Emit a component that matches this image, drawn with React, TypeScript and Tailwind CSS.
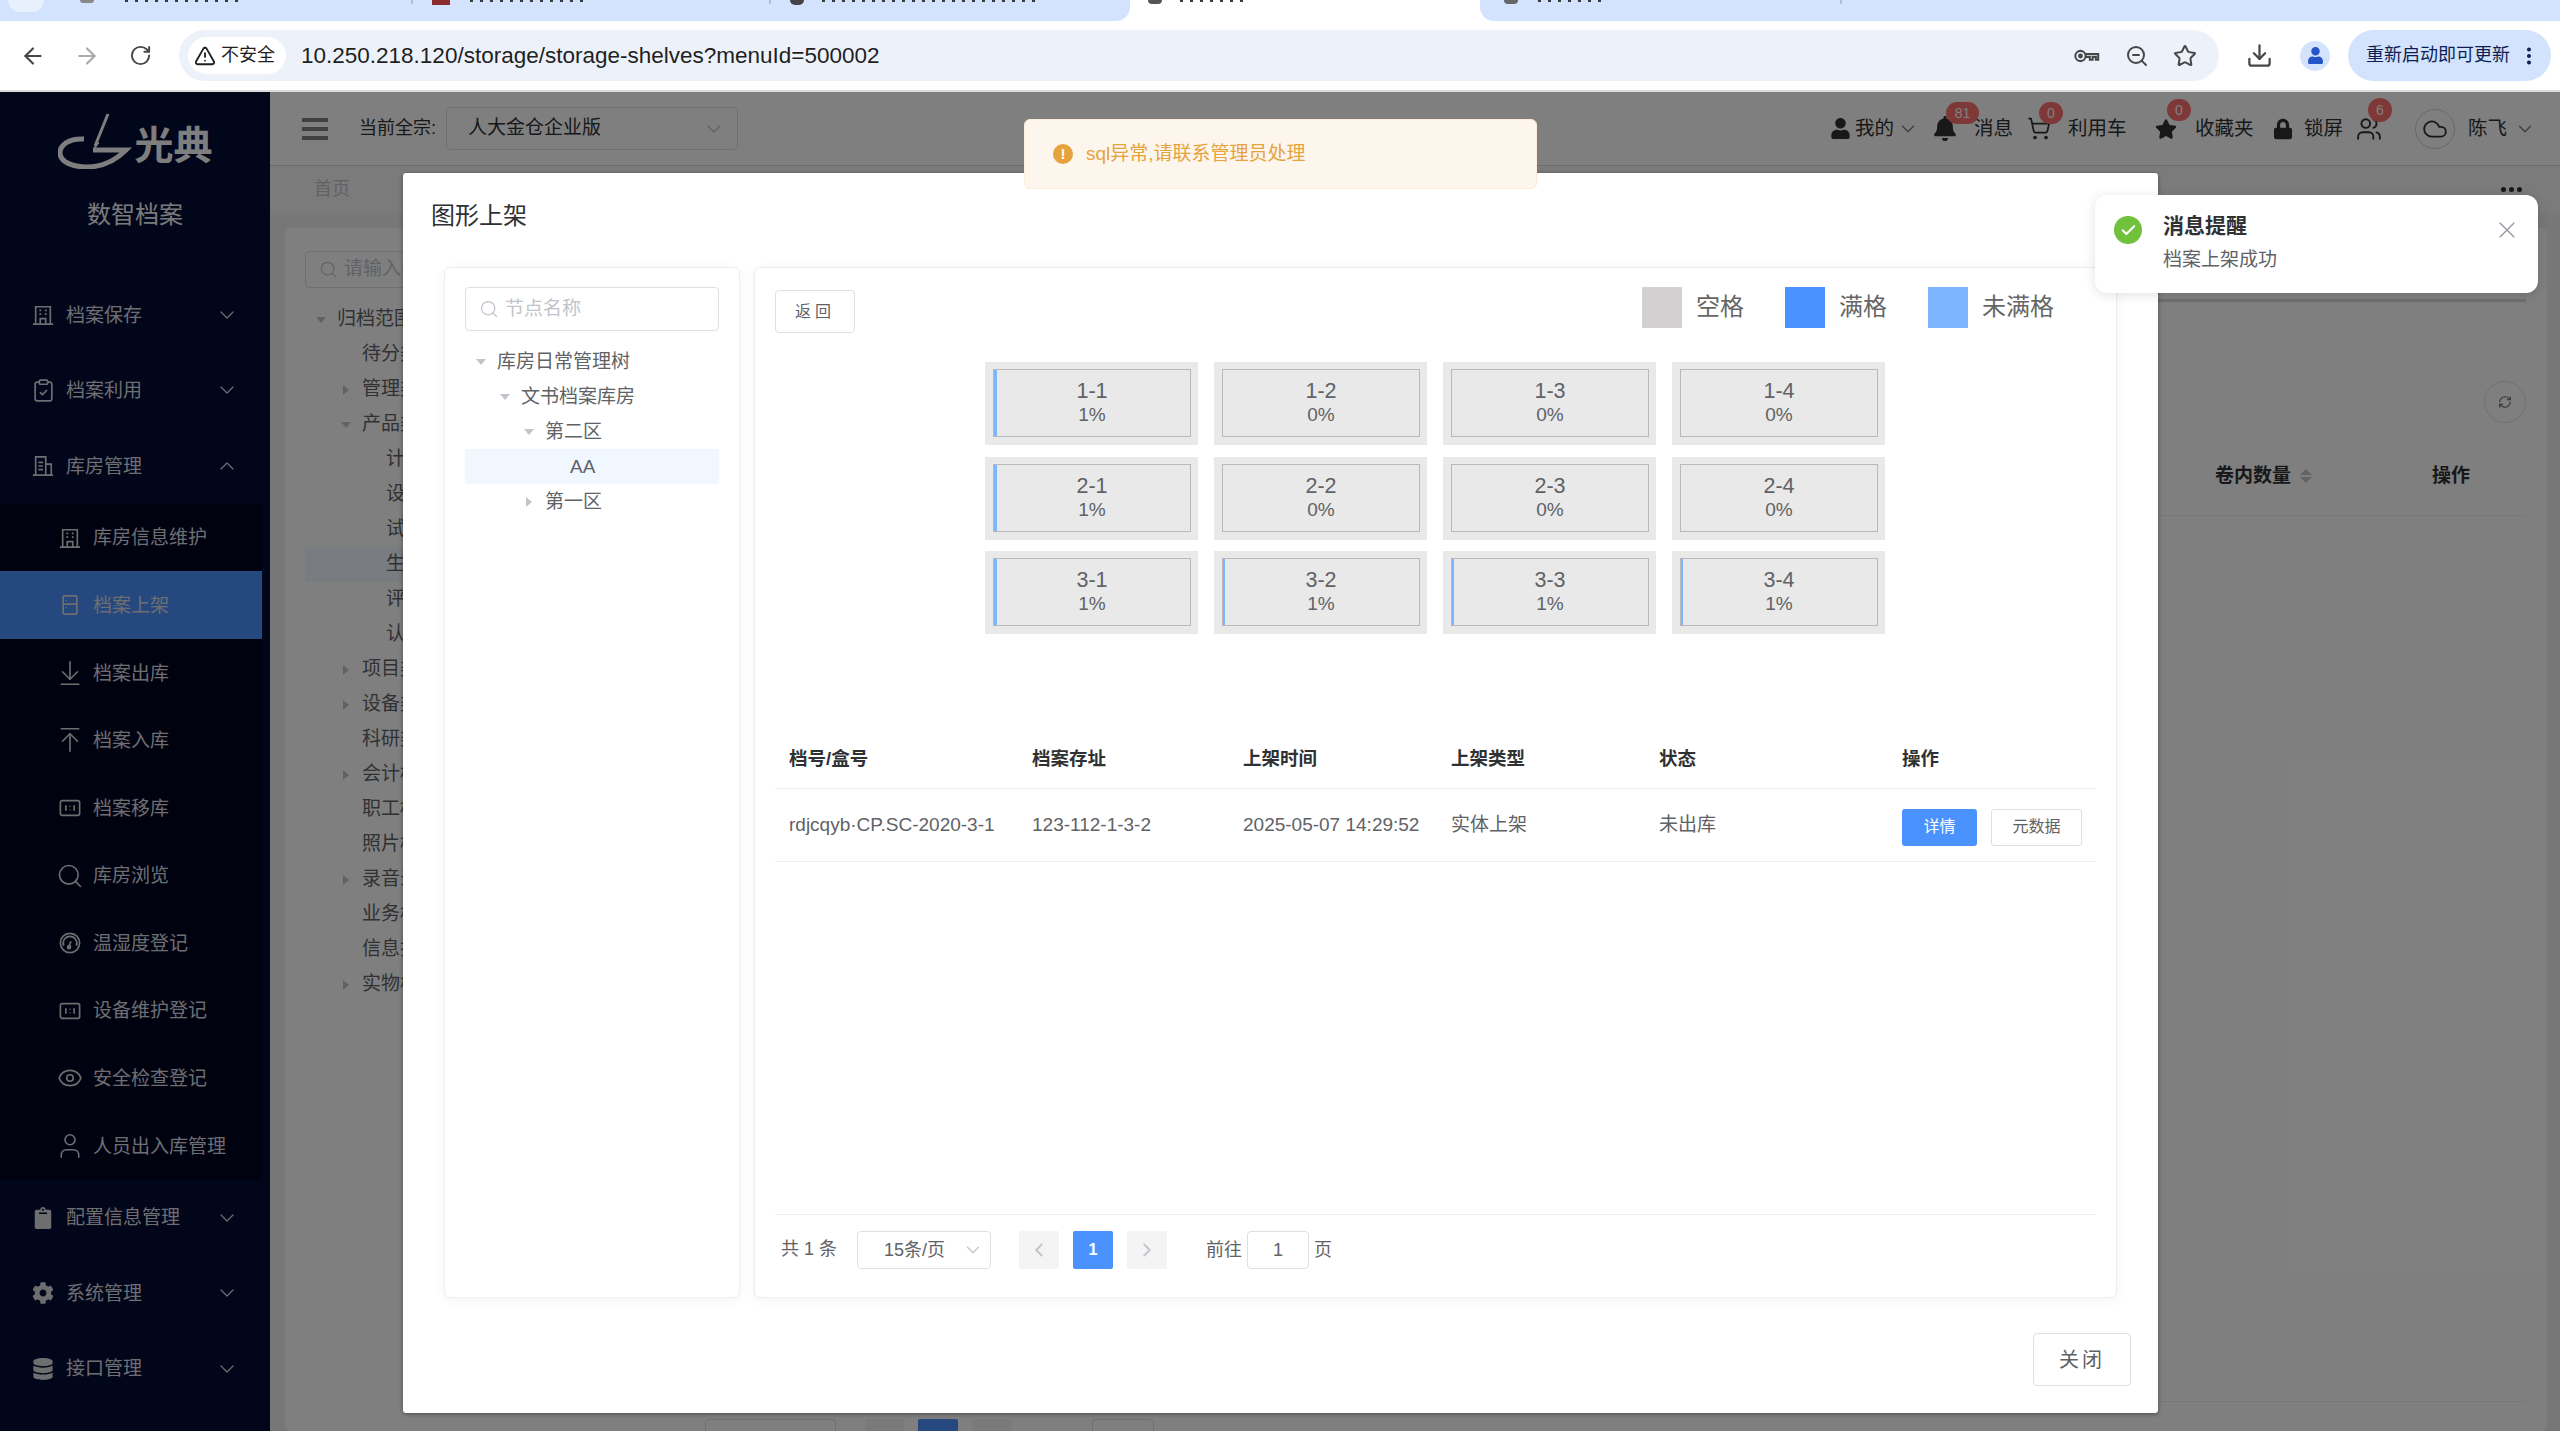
import React from "react";
import {
  ArrowLeft, ArrowRight, RotateCw, TriangleAlert, ZoomOut, Star, Download,
  ChevronDown, ChevronUp, ChevronLeft, ChevronRight, Search, ClipboardCheck, ArrowDownToLine,
  ArrowUpToLine, Eye, User, ShoppingCart, Users, Cloud, X, Check, RefreshCw, MoreVertical,
} from "lucide-react";
import { FaUser, FaBell, FaStar, FaLock, FaClipboard, FaCog, FaDatabase } from "react-icons/fa";

const s = { fill: "none", stroke: "currentColor", strokeWidth: 1.8 };
const BuildIcon = () => (
  <svg viewBox="0 0 24 24" className="w-[22px] h-[22px] shrink-0" {...s}>
    <path d="M4 22V3h16v19M1 22h22M9 22v-6h6v6" />
    <path d="M8 7h2M14 7h2M8 11h2M14 11h2" />
  </svg>
);
const StoreIcon = () => (
  <svg viewBox="0 0 24 24" className="w-[22px] h-[22px] shrink-0" {...s}>
    <path d="M4 22V2h11v20M15 10h6v12M1 22h22M7 8h5M7 12h5M7 16h5" />
  </svg>
);
const ShelfIcon = () => (
  <svg viewBox="0 0 24 24" className="w-[22px] h-[22px] shrink-0" {...s}>
    <rect x="4.5" y="2" width="15" height="20" rx="1.5" />
    <path d="M4.5 11h15M8 6.5v1M8 14.5v1" />
  </svg>
);
const MoveIcon = () => (
  <svg viewBox="0 0 24 24" className="w-[22px] h-[22px] shrink-0" {...s}>
    <rect x="1.5" y="4" width="21" height="16" rx="2" />
    <path d="M7.5 9v6M16.5 9v6M12 9.5v1M12 13.5v1" />
  </svg>
);
const GaugeIcon = () => (
  <svg viewBox="0 0 24 24" className="w-[22px] h-[22px] shrink-0" {...s}>
    <circle cx="12" cy="12" r="10.5" />
    <path d="M5 15a7.5 7.5 0 1 1 14 0" />
    <path d="M11 16l2-6" />
    <circle cx="11" cy="16.5" r="1.6" fill="currentColor" />
  </svg>
);
const ChromeKey = () => (
  <svg viewBox="0 0 30 24" className="w-[28px] h-[24px]" fill="none" stroke="currentColor" strokeWidth="2.2">
    <circle cx="8" cy="12" r="5.5" />
    <circle cx="8" cy="12" r="1.5" fill="currentColor" />
    <path d="M13.5 10H27v6h-2.5v-3H21v3h-3v-3h-4.5" />
  </svg>
);

const i22 = "w-[22px] h-[22px] shrink-0";
const subItems = [
  { t: "库房信息维护", icon: <BuildIcon /> },
  { t: "档案上架", icon: <ShelfIcon />, active: true },
  { t: "档案出库", icon: <ArrowDownToLine className="w-[30px] h-[30px] -m-[4px] shrink-0" strokeWidth={1.3} /> },
  { t: "档案入库", icon: <ArrowUpToLine className="w-[30px] h-[30px] -m-[4px] shrink-0" strokeWidth={1.3} /> },
  { t: "档案移库", icon: <MoveIcon /> },
  { t: "库房浏览", icon: <Search className="w-[28px] h-[28px] -m-[3px] shrink-0" strokeWidth={1.4} /> },
  { t: "温湿度登记", icon: <GaugeIcon /> },
  { t: "设备维护登记", icon: <MoveIcon /> },
  { t: "安全检查登记", icon: <Eye className="w-[26px] h-[26px] -m-[2px] shrink-0" strokeWidth={1.5} /> },
  { t: "人员出入库管理", icon: <User className="w-[30px] h-[30px] -m-[4px] shrink-0" strokeWidth={1.3} /> },
];

function TopItem({ icon, t, open }: { icon: React.ReactNode; t: string; open?: boolean }) {
  return (
    <div className="flex items-center h-[75.6px] pl-[32px] pr-[31px] gap-[12px] text-[19px] text-[#dcdde3]">
      {icon}
      <span className="pt-[2px]">{t}</span>
      {open ? (
        <ChevronUp className="ml-auto w-[24px] h-[24px]" strokeWidth={1.2} />
      ) : (
        <ChevronDown className="ml-auto w-[24px] h-[24px]" strokeWidth={1.2} />
      )}
    </div>
  );
}

function Sidebar() {
  return (
    <div className="w-[270px] shrink-0 bg-[#020c34] flex flex-col">
      <div className="h-[185px] flex flex-col items-center pt-[21px]">
        <div className="flex items-end h-[56px] w-[155px] text-[#fdfdfd]">
          <svg viewBox="0 0 78 56" className="w-[78px] h-[56px] shrink-0" fill="none" stroke="currentColor">
            <path d="M50 1 L37 33" strokeWidth="3" />
            <path d="M36 36l3-7 2 1z" fill="currentColor" />
            <path d="M26 26C11 25 2 32 2 40c0 9 13 14 27 14 16 0 29-7 39-17H35" strokeWidth="5" />
          </svg>
          <span className="text-[39px] leading-[52px] font-bold -ml-[1px] -mb-[3px]">光典</span>
        </div>
        <div className="mt-[30px] text-[24px] leading-[32px] text-[#f4f4f4]">数智档案</div>
      </div>
      <TopItem t="档案保存" icon={<BuildIcon />} />
      <TopItem t="档案利用" icon={<ClipboardCheck className="w-[25px] h-[25px] -m-[1.5px] shrink-0" strokeWidth={1.6} />} />
      <TopItem t="库房管理" icon={<StoreIcon />} open />
      <div className="w-[262px] bg-[#000420] flex flex-col">
        {subItems.map((it) => (
          <div
            key={it.t}
            className={
              "flex items-center h-[67.6px] pl-[59px] gap-[12px] text-[19px] text-[#dcdde3] " +
              (it.active ? "bg-[#4a93ff]" : "")
            }
          >
            {it.icon}
            <span className="pt-[2px]">{it.t}</span>
          </div>
        ))}
      </div>
      <TopItem t="配置信息管理" icon={<FaClipboard className={i22} />} />
      <TopItem t="系统管理" icon={<FaCog className={i22} />} />
      <TopItem t="接口管理" icon={<FaDatabase className={i22} />} />
    </div>
  );
}

function Badge({ n, className }: { n: string; className: string }) {
  return (
    <span
      className={
        "absolute h-[22px] rounded-full bg-[#ff7070] text-white text-[14px] leading-[22px] text-center " + className
      }
    >
      {n}
    </span>
  );
}

function Header() {
  return (
    <div className="h-[74px] shrink-0 border-b border-[#d8d8d8] bg-white flex items-center text-[#303133] text-[18px]">
      <div className="ml-[32px] w-[26px] flex flex-col gap-[5px]">
        <span className="h-[4px] bg-[#808080]" />
        <span className="h-[4px] bg-[#808080]" />
        <span className="h-[4px] bg-[#808080]" />
      </div>
      <span className="ml-[31px]">当前全宗:</span>
      <div className="ml-[10px] w-[292px] h-[43px] border border-[#dcdfe6] rounded-[4px] flex items-center pl-[21px] pr-[11px] text-[19px] text-[#303133]">
        人大金仓企业版
        <ChevronDown className="ml-auto w-[24px] h-[24px] text-[#b9bcc4]" strokeWidth={1.2} />
      </div>
      <div className="ml-auto flex items-center pr-[24px] text-[19.5px]">
        <FaUser className="w-[19px] h-[21px]" />
        <span className="ml-[5px]">我的</span>
        <ChevronDown className="ml-[3px] w-[22px] h-[22px] text-[#777]" strokeWidth={1.3} />
        <div className="relative ml-[14px] flex items-center">
          <FaBell className="w-[24px] h-[25px]" />
          <Badge n="81" className="left-[13px] -top-[12px] w-[33px]" />
          <span className="ml-[17px]">消息</span>
        </div>
        <div className="relative ml-[14px] flex items-center">
          <ShoppingCart className="w-[24px] h-[25px]" strokeWidth={1.7} />
          <Badge n="0" className="left-[12px] -top-[12px] w-[24px]" />
          <span className="ml-[17px]">利用车</span>
        </div>
        <div className="relative ml-[28.5px] flex items-center">
          <FaStar className="w-[22px] h-[22px]" />
          <Badge n="0" className="left-[12px] -top-[15px] w-[24px]" />
          <span className="ml-[18px]">收藏夹</span>
        </div>
        <FaLock className="ml-[20.5px] w-[18px] h-[22px]" />
        <span className="ml-[12px]">锁屏</span>
        <div className="relative ml-[13px]">
          <Users className="w-[26px] h-[26px]" strokeWidth={1.7} />
          <Badge n="6" className="left-[12px] -top-[18px] w-[24px] h-[24px] leading-[24px]" />
        </div>
        <div className="ml-[33px] w-[40px] h-[40px] rounded-full border border-[#d0d0d0] flex items-center justify-center">
          <Cloud className="w-[28px] h-[26px]" strokeWidth={1.7} />
        </div>
        <span className="ml-[13px]">陈飞</span>
        <ChevronDown className="ml-[7px] w-[22px] h-[22px] text-[#777]" strokeWidth={1.3} />
      </div>
    </div>
  );
}

const bgTree: { t: string; cls: string; arrow?: "d" | "r"; hl?: boolean }[] = [
  { t: "归档范围", cls: "pl-[11px]", arrow: "d" },
  { t: "待分类", cls: "pl-[57px]" },
  { t: "管理类", cls: "pl-[36px]", arrow: "r" },
  { t: "产品类", cls: "pl-[36px]", arrow: "d" },
  { t: "计划", cls: "pl-[81px]" },
  { t: "设计", cls: "pl-[81px]" },
  { t: "试验", cls: "pl-[81px]" },
  { t: "生产", cls: "pl-[81px]", hl: true },
  { t: "评审", cls: "pl-[81px]" },
  { t: "认证", cls: "pl-[81px]" },
  { t: "项目类", cls: "pl-[36px]", arrow: "r" },
  { t: "设备类", cls: "pl-[36px]", arrow: "r" },
  { t: "科研类", cls: "pl-[57px]" },
  { t: "会计档案", cls: "pl-[36px]", arrow: "r" },
  { t: "职工档案", cls: "pl-[57px]" },
  { t: "照片档案", cls: "pl-[57px]" },
  { t: "录音录像", cls: "pl-[36px]", arrow: "r" },
  { t: "业务档案", cls: "pl-[57px]" },
  { t: "信息技术", cls: "pl-[57px]" },
  { t: "实物档案", cls: "pl-[36px]", arrow: "r" },
];

function Caret({ dir }: { dir: "d" | "r" }) {
  return dir === "d" ? (
    <span className="w-0 h-0 border-x-[5px] border-x-transparent border-t-[6px] border-t-[#c0c4cc] shrink-0" />
  ) : (
    <span className="w-0 h-0 border-y-[5px] border-y-transparent border-l-[6px] border-l-[#c0c4cc] shrink-0 ml-[2px] mr-[2px]" />
  );
}

function Background() {
  return (
    <div className="flex-1 flex flex-col bg-[#eeeeee] min-w-0">
      <Header />
      <div className="h-[47px] shrink-0 bg-[#f6f6f6] flex items-center pl-[44px] pr-[38px] text-[18px] text-[#c0c4cc]">
        首页
        <span className="ml-auto flex gap-[3px]">
          <span className="w-[5px] h-[5px] rounded-full bg-[#303133]" />
          <span className="w-[5px] h-[5px] rounded-full bg-[#303133]" />
          <span className="w-[5px] h-[5px] rounded-full bg-[#303133]" />
        </span>
      </div>
      <div className="flex-1 min-h-0 pl-[15px] pr-[13px] pt-[15px]">
        <div className="h-full bg-white rounded-[6px] flex">
          <div className="w-[400px] shrink-0 pl-[20px] pt-[23px] text-[19px] text-[#606266]">
            <div className="w-[300px] h-[37px] border border-[#dcdfe6] rounded-[4px] flex items-center pl-[13px] gap-[6px] text-[#c0c4cc]">
              <Search className="w-[19px] h-[19px]" strokeWidth={1.5} />
              请输入关键字
            </div>
            <div className="mt-[14px] flex flex-col">
              {bgTree.map((r) => (
                <div
                  key={r.t}
                  className={
                    "h-[35px] flex items-center gap-[11px] " + r.cls + (r.hl ? " bg-[#f0f7ff]" : "")
                  }
                >
                  {r.arrow && <Caret dir={r.arrow} />}
                  <span className="whitespace-nowrap">{r.t}</span>
                </div>
              ))}
            </div>
          </div>
          <div className="flex-1 pr-[21px] flex flex-col">
            <div className="mt-[71px] h-[3px] bg-[#dcdcdc]" />
            <div className="mt-[79px] self-end w-[42px] h-[42px] rounded-full border border-[#e2e2e2] flex items-center justify-center">
              <RefreshCw className="w-[14px] h-[14px] text-[#606266]" strokeWidth={1.8} />
            </div>
            <div className="h-[93px] pt-[14px] border-b border-[#ebeef5] flex items-center justify-end text-[19px] font-bold text-[#303133]">
              <span>卷内数量</span>
              <span className="ml-[9px] flex flex-col gap-[2px]">
                <span className="w-0 h-0 border-x-[6px] border-x-transparent border-b-[6px] border-b-[#c0c4cc]" />
                <span className="w-0 h-0 border-x-[6px] border-x-transparent border-t-[6px] border-t-[#c0c4cc]" />
              </span>
              <span className="ml-[120px] mr-[56px]">操作</span>
            </div>
            <div className="flex-1" />
            <div className="border-t border-[#ebeef5]" />
            <div className="h-[29px] pt-[17px] flex text-[18px] text-[#606266] overflow-hidden">
              <span className="ml-[20px] w-[131px] h-[38px] border border-[#dcdfe6] rounded-[4px]" />
              <span className="ml-[29px] w-[39px] h-[38px] rounded-[2px] bg-[#f4f4f5]" />
              <span className="ml-[14px] w-[40px] h-[38px] rounded-[2px] bg-[#4a93ff]" />
              <span className="ml-[14px] w-[40px] h-[38px] rounded-[2px] bg-[#f4f4f5]" />
              <span className="ml-[80px] w-[62px] h-[38px] border border-[#dcdfe6] rounded-[4px]" />
            </div>
          </div>
        </div>
      </div>
    </div>
  );
}

const treeRows = [
  { t: "库房日常管理树", arrow: "d" as const, cls: "pl-[11px]" },
  { t: "文书档案库房", arrow: "d" as const, cls: "pl-[35px]" },
  { t: "第二区", arrow: "d" as const, cls: "pl-[59px]" },
  { t: "AA", cls: "pl-[105px] bg-[#f0f7ff]" },
  { t: "第一区", arrow: "r" as const, cls: "pl-[59px]" },
];

const panel = "bg-white border border-[#ebeef5] rounded-[6px] shadow-[0_2px_12px_rgba(0,0,0,0.05)]";

function Tree() {
  return (
    <div className={panel + " w-[296px] shrink-0 pt-[19px] px-[20px]"}>
      <div className="w-[254px] h-[44px] border border-[#dcdfe6] rounded-[4px] flex items-center pl-[13px] gap-[6px] text-[19px] text-[#c0c4cc]">
        <Search className="w-[20px] h-[20px]" strokeWidth={1.5} />
        节点名称
      </div>
      <div className="mt-[12.5px] w-[254px] flex flex-col text-[19px] text-[#606266]">
        {treeRows.map((r) => (
          <div key={r.t} className={"h-[35px] flex items-center gap-[11px] pt-[2px] " + r.cls}>
            {r.arrow && <Caret dir={r.arrow} />}
            <span>{r.t}</span>
          </div>
        ))}
      </div>
    </div>
  );
}

const cells = [
  { a: "1-1", p: "1%", bar: "w-[3px]" },
  { a: "1-2", p: "0%" },
  { a: "1-3", p: "0%" },
  { a: "1-4", p: "0%" },
  { a: "2-1", p: "1%", bar: "w-[3px]" },
  { a: "2-2", p: "0%" },
  { a: "2-3", p: "0%" },
  { a: "2-4", p: "0%" },
  { a: "3-1", p: "1%", bar: "w-[3px]" },
  { a: "3-2", p: "1%", bar: "w-[2px]" },
  { a: "3-3", p: "1%", bar: "w-[2px]" },
  { a: "3-4", p: "1%", bar: "w-[2px]" },
];

function Cell({ a, p, bar }: { a: string; p: string; bar?: string }) {
  return (
    <div className="h-[83px] bg-[#e9e9e9] pt-[7px] pb-[8px] pl-[8px] pr-[7px]">
      <div className="relative h-full border border-[#b9b9b9] flex flex-col items-center justify-center text-[#606266]">
        {bar && <span className={"absolute left-0 inset-y-0 bg-[#7db5ff] " + bar} />}
        <span className="text-[21.5px] leading-[24px]">{a}</span>
        <span className="text-[19px] leading-[24px]">{p}</span>
      </div>
    </div>
  );
}

function Legend({ color, t }: { color: string; t: string }) {
  return (
    <div className="flex items-center gap-[14px]">
      <span className={"w-[40px] h-[41px] " + color} />
      <span className="text-[24px] leading-[32px] -mt-[1px] text-[#666666]">{t}</span>
    </div>
  );
}

const cols = "grid grid-cols-[257px_211px_208px_208px_243px_194px] items-center";

function Right() {
  return (
    <div className={panel + " flex-1 min-w-0 flex flex-col"}>
      <div className="flex items-start justify-between pl-[20px] pr-[62px] pt-[19px]">
        <button className="mt-[3px] w-[80px] h-[43px] border border-[#dcdfe6] rounded-[4px] bg-white text-[16px] text-[#606266] tracking-[4px]">
          返回
        </button>
        <div className="flex gap-[41px]">
          <Legend color="bg-[#d2d0d0]" t="空格" />
          <Legend color="bg-[#4a93ff]" t="满格" />
          <Legend color="bg-[#7db5ff]" t="未满格" />
        </div>
      </div>
      <div className="mt-[29px] ml-[230px] grid grid-cols-[213px_213px_213px_213px] gap-x-[16px] gap-y-[11.5px]">
        {cells.map((c) => (
          <Cell key={c.a} {...c} />
        ))}
      </div>
      <div className="mt-[93px] mx-[20px] text-[19px] text-[#606266]">
        <div className={cols + " h-[62px] pt-[2px] border-b border-[#ebeef5] text-[18.5px] font-bold text-[#303133]"}>
          <span className="pl-[14px]">档号/盒号</span>
          <span>档案存址</span>
          <span>上架时间</span>
          <span>上架类型</span>
          <span>状态</span>
          <span>操作</span>
        </div>
        <div className={cols + " h-[73px] pt-[1px] border-b border-[#ebeef5]"}>
          <span className="pl-[14px] whitespace-nowrap">rdjcqyb·CP.SC-2020-3-1</span>
          <span>123-112-1-3-2</span>
          <span className="whitespace-nowrap">2025-05-07 14:29:52</span>
          <span>实体上架</span>
          <span>未出库</span>
          <span className="flex gap-[14px] pt-[3px]">
            <button className="w-[75px] h-[37px] rounded-[3px] bg-[#4a93ff] text-white text-[16px]">详情</button>
            <button className="w-[91px] h-[37px] rounded-[3px] border border-[#dcdfe6] bg-white text-[#606266] text-[16px]">
              元数据
            </button>
          </span>
        </div>
      </div>
      <div className="mt-auto mx-[20px] h-[83px] border-t border-[#ebeef5] flex items-center pl-[6px] pb-[12px] text-[18px] text-[#606266]">
        <span className="whitespace-pre -mt-[2px]">共 1 条</span>
        <div className="ml-[20px] w-[134px] h-[38px] border border-[#dcdfe6] rounded-[4px] flex items-center pl-[26px] pr-[6px]">
          15条/页
          <ChevronDown className="ml-auto w-[22px] h-[22px] text-[#c0c4cc]" strokeWidth={1.3} />
        </div>
        <div className="ml-[28px] w-[40px] h-[38px] rounded-[2px] bg-[#f4f4f5] flex items-center justify-center text-[#c0c4cc]">
          <ChevronLeft className="w-[22px] h-[22px]" strokeWidth={2} />
        </div>
        <div className="ml-[14px] w-[40px] h-[38px] rounded-[2px] bg-[#4a93ff] flex items-center justify-center text-white text-[16px] font-bold">
          1
        </div>
        <div className="ml-[14px] w-[40px] h-[38px] rounded-[2px] bg-[#f4f4f5] flex items-center justify-center text-[#c0c4cc]">
          <ChevronRight className="w-[22px] h-[22px]" strokeWidth={2} />
        </div>
        <span className="ml-[39px]">前往</span>
        <div className="ml-[5px] w-[62px] h-[38px] border border-[#dcdfe6] rounded-[4px] flex items-center justify-center">1</div>
        <span className="ml-[5px]">页</span>
      </div>
    </div>
  );
}

function Frag({ className, n }: { className: string; n: number }) {
  return (
    <span className={"absolute top-0 flex gap-[7px] " + className}>
      {Array.from({ length: n }).map((_, i) => (
        <span key={i} className="w-[3px] h-[2px] bg-[#3a3a3a]" />
      ))}
    </span>
  );
}

function Chrome() {
  return (
    <div className="shrink-0 bg-white">
      <div className="h-[21px] flex overflow-hidden">
        <div className="w-[1130px] h-full bg-[#d3e3fd] rounded-br-[14px] flex relative">
          <span className="ml-[8px] w-[36px] h-[12px] rounded-b-full bg-[#e8f0fe]" />
          <span className="absolute left-[80px] top-0 w-[14px] h-[3px] rounded-b-full bg-[#888]" />
          <Frag className="left-[125px]" n={12} />
          <span className="absolute left-[411px] top-0 w-[2px] h-[4px] bg-[#a8c0e8]" />
          <span className="absolute left-[769px] top-0 w-[2px] h-[4px] bg-[#a8c0e8]" />
          <span className="absolute left-[432px] top-0 w-[18px] h-[5px] bg-[#8a2a2a]" />
          <Frag className="left-[470px]" n={12} />
          <span className="absolute left-[790px] top-0 w-[14px] h-[5px] rounded-b-full bg-[#444]" />
          <Frag className="left-[822px]" n={22} />
        </div>
        <div className="w-[350px] relative">
          <span className="absolute left-[18px] top-0 w-[14px] h-[4px] rounded-b-full bg-[#555]" />
          <Frag className="left-[50px]" n={7} />
        </div>
        <div className="flex-1 bg-[#d3e3fd] rounded-bl-[14px] relative">
          <span className="absolute left-[24px] top-0 w-[14px] h-[4px] rounded-b-full bg-[#666]" />
          <Frag className="left-[58px]" n={7} />
          <span className="absolute left-[360px] top-0 w-[2px] h-[4px] bg-[#a8c0e8]" />
        </div>
      </div>
      <div className="h-[69px] flex items-center text-[#474747] pr-[9px]">
        <ArrowLeft className="ml-[20px] w-[26px] h-[26px]" strokeWidth={2} />
        <ArrowRight className="ml-[28px] w-[26px] h-[26px] text-[#a9a9a9]" strokeWidth={2} />
        <RotateCw className="ml-[29px] w-[23px] h-[23px]" strokeWidth={2} />
        <div className="ml-[27px] w-[2040px] h-[51px] rounded-full bg-[#edf2fa] flex items-center pl-[9px] pr-[22px]">
          <div className="w-[98px] h-[37px] rounded-full bg-white flex items-center pl-[6px] gap-[5px] text-[18px] text-[#1f1f1f]">
            <TriangleAlert className="w-[22px] h-[22px]" strokeWidth={2} />
            不安全
          </div>
          <span className="ml-[15px] text-[22.5px] text-[#1f1f1f] whitespace-nowrap">
            10.250.218.120/storage/storage-shelves?menuId=500002
          </span>
          <div className="ml-auto flex items-center gap-[24px]">
            <ChromeKey />
            <ZoomOut className="w-[24px] h-[24px]" strokeWidth={2} />
            <Star className="w-[24px] h-[24px]" strokeWidth={2} />
          </div>
        </div>
        <Download className="ml-[27px] w-[27px] h-[27px]" strokeWidth={2} />
        <div className="ml-[27px] w-[30px] h-[30px] rounded-full bg-[#d3e3fd] flex items-center justify-center">
          <FaUser className="w-[17px] h-[17px] text-[#2456c8]" />
        </div>
        <div className="ml-auto w-[203px] h-[51px] rounded-full bg-[#d3e3fd] flex items-center pl-[18px] text-[18px] text-[#0b1f54] whitespace-nowrap">
          重新启动即可更新
          <MoreVertical className="ml-[8px] w-[22px] h-[22px]" strokeWidth={2.4} />
        </div>
      </div>
      <div className="h-[2px] bg-[#dadada]" />
    </div>
  );
}

export default function App() {
  return (
    <div className="w-[2560px] h-[1431px] overflow-hidden flex flex-col [font-family:Liberation_Sans,Noto_Sans_CJK_SC,sans-serif]">
      <Chrome />
      <div className="relative flex-1 min-h-0 flex">
        <Sidebar />
        <Background />
        <div className="absolute inset-0 bg-black/50" />

        <div className="absolute left-[403px] top-[81px] w-[1755px] h-[1240px] bg-white rounded-[3px] shadow-[0_1px_4px_rgba(0,0,0,0.4)] flex flex-col">
          <div className="h-[94px] shrink-0 pl-[28px] pt-[26px] text-[24px] leading-[34px] text-[#303133]">图形上架</div>
          <div className="h-[1031px] shrink-0 flex gap-[14px] px-[41px]">
            <Tree />
            <Right />
          </div>
          <div className="flex justify-end pr-[27px] pt-[35px]">
            <button className="w-[98px] h-[53px] border border-[#dcdfe6] rounded-[4px] bg-white text-[20px] text-[#606266] tracking-[3px]">
              关闭
            </button>
          </div>
        </div>

        <div className="absolute left-[1024px] top-[27px] w-[513px] h-[70px] bg-[#fdf6ec] border border-[#faecd8] rounded-[6px] flex items-center pl-[28px] gap-[13px] text-[19px] text-[#e6a23c]">
          <span className="w-[20px] h-[20px] rounded-full bg-[#e6a23c] text-white text-[15px] leading-[20px] font-bold text-center">!</span>
          <span>sql异常,请联系管理员处理</span>
        </div>

        <div className="absolute left-[2095px] top-[103px] w-[443px] h-[98px] bg-white rounded-[12px] shadow-[0_2px_12px_rgba(0,0,0,0.12)] flex pl-[19px] pt-[21px]">
          <span className="w-[28px] h-[28px] rounded-full bg-[#70c13c] flex items-center justify-center text-white shrink-0">
            <Check className="w-[17px] h-[17px]" strokeWidth={3} />
          </span>
          <div className="ml-[21px] -mt-[5px]">
            <div className="text-[21px] leading-[30px] font-bold text-[#303133]">消息提醒</div>
            <div className="mt-[5px] text-[19px] leading-[28px] text-[#606266]">档案上架成功</div>
          </div>
          <X className="ml-auto mr-[17px] w-[28px] h-[28px] text-[#909399]" strokeWidth={1} />
        </div>
      </div>
    </div>
  );
}
